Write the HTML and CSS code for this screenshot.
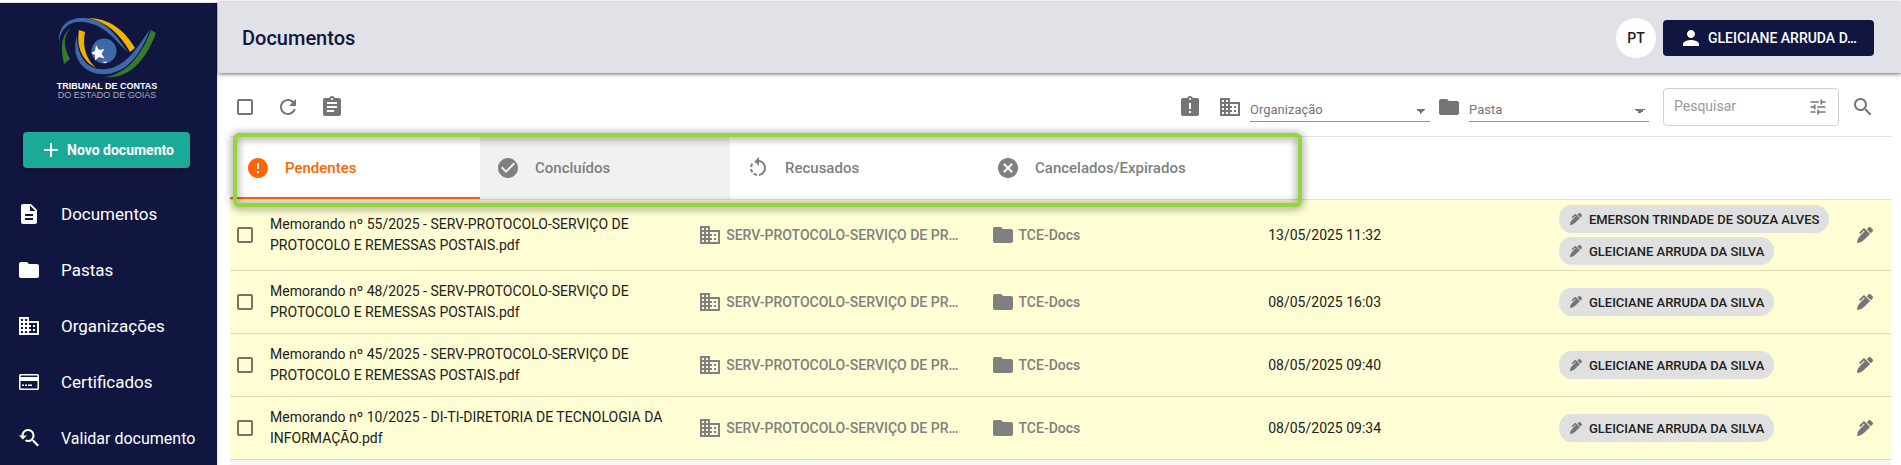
FILE: index.html
```html
<!DOCTYPE html>
<html lang="pt-BR">
<head>
<meta charset="utf-8">
<meta name="viewport" content="width=device-width, initial-scale=1">
<title>Documentos</title>
<link rel="stylesheet" href="styles.css">
</head>
<body>
<svg class="sprite" aria-hidden="true">
  <symbol id="i-description" viewBox="0 0 24 24"><path d="M14 2H6c-1.1 0-1.99.9-1.99 2L4 20c0 1.1.89 2 1.99 2H18c1.1 0 2-.9 2-2V8l-6-6zm2 16H8v-2h8v2zm0-4H8v-2h8v2zm-3-5V3.5L18.5 9H13z"/></symbol>
  <symbol id="i-folder" viewBox="0 0 24 24"><path d="M10 4H4c-1.1 0-1.99.9-1.99 2L2 18c0 1.1.9 2 2 2h16c1.1 0 2-.9 2-2V8c0-1.1-.9-2-2-2h-8l-2-2z"/></symbol>
  <symbol id="i-domain" viewBox="0 0 24 24"><path d="M12 7V3H2v18h20V7H12zM6 19H4v-2h2v2zm0-4H4v-2h2v2zm0-4H4V9h2v2zm0-4H4V5h2v2zm4 12H8v-2h2v2zm0-4H8v-2h2v2zm0-4H8V9h2v2zm0-4H8V5h2v2zm10 12h-8v-2h2v-2h-2v-2h2v-2h-2V9h8v10zm-2-8h-2v2h2v-2zm0 4h-2v2h2v-2z"/></symbol>
  <symbol id="i-card" viewBox="0 0 24 24"><path fill-rule="evenodd" d="M3.500 4h17A1.500 1.500 0 0 1 22 5.500v13a1.500 1.500 0 0 1-1.500 1.500h-17A1.500 1.500 0 0 1 2 18.500v-13A1.500 1.500 0 0 1 3.500 4zM3.500 5.500V7h17V5.500zM3.500 11v7.500h17V11zM5 14.500h2V16H5zm3 0h2V16H8zm3 0h4V16h-4z"/></symbol>
  <symbol id="i-validate" viewBox="0 0 24 24"><path d="M17.010 14h-.8l-.27-.27c.98-1.140 1.570-2.610 1.570-4.230 0-3.590-2.910-6.500-6.500-6.500s-6.500 3-6.500 6.500H2l3.840 4 4.160-4H6.510C6.510 7 8.530 5 11.010 5s4.500 2.010 4.500 4.500c0 2.480-2.020 4.500-4.500 4.500-.65 0-1.260-.14-1.820-.38L7.710 15.100c.97.57 2.090.9 3.300.9 1.610 0 3.080-.59 4.220-1.570l.27.27v.79l5.010 4.990L22 19l-4.990-5z"/></symbol>
  <symbol id="i-add" viewBox="0 0 24 24"><path d="M19 13h-6v6h-2v-6H5v-2h6V5h2v6h6v2z"/></symbol>
  <symbol id="i-refresh" viewBox="0 0 24 24"><path d="M17.650 6.350C16.200 4.900 14.210 4 12 4c-4.420 0-7.990 3.580-7.990 8s3.570 8 7.990 8c3.730 0 6.840-2.550 7.730-6h-2.080c-.82 2.330-3.040 4-5.650 4-3.310 0-6-2.690-6-6s2.690-6 6-6c1.660 0 3.140.69 4.220 1.780L13 11h7V4l-2.350 2.350z"/></symbol>
  <symbol id="i-assignment" viewBox="0 0 24 24"><path d="M19 3h-4.180C14.400 1.840 13.300 1 12 1c-1.300 0-2.400.84-2.820 2H5c-1.100 0-2 .9-2 2v14c0 1.100.9 2 2 2h14c1.100 0 2-.9 2-2V5c0-1.100-.9-2-2-2zm-7 0c.55 0 1 .45 1 1s-.45 1-1 1-1-.45-1-1 .45-1 1-1zm2 14H7v-2h7v2zm3-4H7v-2h10v2zm0-4H7V7h10v2z"/></symbol>
  <symbol id="i-late" viewBox="0 0 24 24"><path d="M19 3h-4.180C14.400 1.840 13.300 1 12 1c-1.300 0-2.400.84-2.820 2H5c-1.100 0-2 .9-2 2v14c0 1.100.9 2 2 2h14c1.100 0 2-.9 2-2V5c0-1.100-.9-2-2-2zm-6 15h-2v-2h2v2zm0-4h-2V8h2v6zm-1-9c-.55 0-1-.45-1-1s.45-1 1-1 1 .45 1 1-.45 1-1 1z"/></symbol>
  <symbol id="i-error" viewBox="0 0 24 24"><path d="M12 2C6.480 2 2 6.480 2 12s4.480 10 10 10 10-4.480 10-10S17.520 2 12 2zm1 15h-2v-2h2v2zm0-4h-2V7h2v6z"/></symbol>
  <symbol id="i-check" viewBox="0 0 24 24"><path d="M12 2C6.480 2 2 6.480 2 12s4.480 10 10 10 10-4.480 10-10S17.520 2 12 2zm-2 15l-5-5 1.410-1.410L10 14.170l7.590-7.590L19 8l-9 9z"/></symbol>
  <symbol id="i-rotate" viewBox="0 0 24 24"><path d="M7.110 8.530L5.700 7.110C4.800 8.270 4.240 9.610 4.070 11h2.020c.14-.87.49-1.720 1.020-2.470zM6.090 13H4.070c.17 1.390.72 2.730 1.620 3.890l1.410-1.420c-.52-.75-.87-1.590-1.010-2.470zm1.010 5.320c1.160.9 2.510 1.440 3.900 1.610V17.900c-.87-.15-1.710-.49-2.460-1.030L7.100 18.320zM13 4.070V1L8.450 5.550 13 10V6.090c2.840.48 5 2.940 5 5.910s-2.160 5.430-5 5.910v2.020c3.950-.49 7-3.850 7-7.930s-3.050-7.440-7-7.930z"/></symbol>
  <symbol id="i-cancel" viewBox="0 0 24 24"><path d="M12 2C6.470 2 2 6.470 2 12s4.470 10 10 10 10-4.470 10-10S17.530 2 12 2zm5 13.590L15.590 17 12 13.410 8.410 17 7 15.590 10.590 12 7 8.410 8.410 7 12 10.590 15.590 7 17 8.410 13.410 12 17 15.590z"/></symbol>
  <symbol id="i-person" viewBox="0 0 24 24"><path d="M12 12c2.210 0 4-1.790 4-4s-1.790-4-4-4-4 1.790-4 4 1.790 4 4 4zm0 2c-2.670 0-8 1.340-8 4v2h16v-2c0-2.660-5.330-4-8-4z"/></symbol>
  <symbol id="i-tune" viewBox="0 0 24 24"><path d="M3 17v2h6v-2H3zM3 5v2h10V5H3zm10 16v-2h8v-2h-8v-2h-2v6h2zM7 9v2H3v2h4v2h2V9H7zm14 4v-2H11v2h10zm-6-4h2V7h4V5h-4V3h-2v6z"/></symbol>
  <symbol id="i-search" viewBox="0 0 24 24"><path d="M15.500 14h-.79l-.28-.27C15.410 12.590 16 11.110 16 9.500 16 5.910 13.090 3 9.500 3S3 5.910 3 9.500 5.910 16 9.500 16c1.610 0 3.090-.59 4.230-1.570l.27.28v.79l5 4.990L20.490 19l-4.990-5zm-6 0C7.010 14 5 11.990 5 9.500S7.010 5 9.500 5 14 7.010 14 9.500 11.990 14 9.500 14z"/></symbol>
  <symbol id="i-pen" viewBox="0 0 512 512"><path d="M497.940 74.170l-60.110-60.110c-18.750-18.750-49.160-18.750-67.910 0l-56.550 56.550 128.020 128.020 56.550-56.550c18.750-18.750 18.750-49.150 0-67.910zm-246.800-20.530c-15.620-15.620-40.940-15.620-56.560 0L75.800 172.430c-6.250 6.250-6.250 16.380 0 22.620l22.630 22.630c6.250 6.250 16.380 6.250 22.630 0l101.820-101.820 22.630 22.620L93.950 290.030A327.038 327.038 0 0 0 .17 485.110l-.03.23c-1.700 15.280 11.210 28.200 26.490 26.510a327.020 327.020 0 0 0 195.340-93.800l196.790-196.790-82.770-82.770-84.850-84.850z"/></symbol>
</svg>

<div class="app">
  <aside class="sidebar">
    <div class="brand">
      <svg class="brand-mark" viewBox="0 0 100 62" aria-hidden="true">
        <path fill="#357a2e" d="M14 11C3 19 4 32 7 47L13 42C7 31 5 20 14 11z"/>
        <path fill="#f2b200" d="M31 1C51 1 67 12 78 31L73 35C63 17 50 5 31 1z"/>
        <path fill="#3f68a6" d="M2 25C1 7 13 0 28 1C50 3 60 20 71 35C57 23 49 8 27 5C13 3 4 11 2 25z"/>
        <path fill="#f2b200" d="M22 13L28 15C25 30 29 42 39 51C26 44 19 31 22 13z"/>
        <path fill="#357a2e" d="M94 13L99 16C91 38 75 63 47 60C69 58 85 38 94 13z"/>
        <path fill="#3f68a6" d="M20 19C20 38 29 51 43 52C66 54 79 33 93 12C84 38 68 59 43 57C23 55 14 37 20 19z"/>
        <circle fill="#3f68a6" cx="47" cy="34" r="12.500"/>
        <path fill="#fff" d="M39 28l3 5 5.500-1-3 4.500 3 5-5.500-1.500-4 3.500v-5.500l-4-2 4-2z"/>
        <path fill="#fff" d="M46 44l2 1 2-1-1 2h-2z"/>
      </svg>
      <div class="brand-name">TRIBUNAL DE CONTAS</div>
      <div class="brand-sub">DO ESTADO DE GOIÁS</div>
    </div>
    <button class="new-doc" type="button"><svg class="icon"><use href="#i-add"/></svg>Novo documento</button>
    <nav class="menu">
      <a href="#documentos"><svg class="icon"><use href="#i-description"/></svg>Documentos</a>
      <a href="#pastas"><svg class="icon"><use href="#i-folder"/></svg>Pastas</a>
      <a href="#organizacoes"><svg class="icon"><use href="#i-domain"/></svg>Organizações</a>
      <a href="#certificados"><svg class="icon"><use href="#i-card"/></svg>Certificados</a>
      <a class="long" href="#validar"><svg class="icon"><use href="#i-validate"/></svg>Validar documento</a>
    </nav>
  </aside>

  <div class="page">
    <header class="topbar">
      <h1>Documentos</h1>
      <button class="lang" type="button">PT</button>
      <button class="user" type="button"><svg class="icon"><use href="#i-person"/></svg>GLEICIANE ARRUDA D…</button>
    </header>

    <main class="content">
      <div class="toolbar">
        <input class="check" type="checkbox" aria-label="Selecionar todos">
        <button class="icon-btn" type="button" aria-label="Atualizar"><svg class="icon"><use href="#i-refresh"/></svg></button>
        <button class="icon-btn" type="button" aria-label="Relatório"><svg class="icon"><use href="#i-assignment"/></svg></button>
        <div class="filters">
          <button class="icon-btn" type="button" aria-label="Atrasados"><svg class="icon"><use href="#i-late"/></svg></button>
          <div class="filter">
            <svg class="icon"><use href="#i-domain"/></svg>
            <select aria-label="Organização"><option>Organização</option></select>
          </div>
          <div class="filter">
            <svg class="icon"><use href="#i-folder"/></svg>
            <select aria-label="Pasta"><option>Pasta</option></select>
          </div>
          <div class="search">
            <input type="text" placeholder="Pesquisar" aria-label="Pesquisar">
            <button class="tune" type="button" aria-label="Filtros"><svg class="icon icon-sm"><use href="#i-tune"/></svg></button>
          </div>
          <button class="icon-btn" type="button" aria-label="Buscar"><svg class="icon"><use href="#i-search"/></svg></button>
        </div>
      </div>

      <div class="tabs">
        <button class="tab active" type="button"><svg class="icon"><use href="#i-error"/></svg>Pendentes</button>
        <button class="tab hover" type="button"><svg class="icon"><use href="#i-check"/></svg>Concluídos</button>
        <button class="tab" type="button"><svg class="icon"><use href="#i-rotate"/></svg>Recusados</button>
        <button class="tab" type="button"><svg class="icon"><use href="#i-cancel"/></svg>Cancelados/Expirados</button>
        <div class="highlight"></div>
      </div>

      <table class="docs">
        <colgroup><col class="c-check"><col class="c-name"><col class="c-org"><col class="c-folder"><col class="c-date"><col class="c-people"><col class="c-edit"></colgroup>
        <tbody>
          <tr>
            <td><input class="check" type="checkbox" aria-label="Selecionar Memorando 55/2025"></td>
            <td class="name">Memorando nº 55/2025 - SERV-PROTOCOLO-SERVIÇO DE PROTOCOLO E REMESSAS POSTAIS.pdf</td>
            <td><div class="tag"><svg class="icon"><use href="#i-domain"/></svg>SERV-PROTOCOLO-SERVIÇO DE PR…</div></td>
            <td><div class="tag"><svg class="icon"><use href="#i-folder"/></svg>TCE-Docs</div></td>
            <td>13/05/2025 11:32</td>
            <td><div class="chips"><span class="chip"><svg class="pen-sm"><use href="#i-pen"/></svg>EMERSON TRINDADE DE SOUZA ALVES</span><span class="chip"><svg class="pen-sm"><use href="#i-pen"/></svg>GLEICIANE ARRUDA DA SILVA</span></div></td>
            <td><button class="edit" type="button" aria-label="Assinar"><svg class="pen"><use href="#i-pen"/></svg></button></td>
          </tr>
          <tr>
            <td><input class="check" type="checkbox" aria-label="Selecionar Memorando 48/2025"></td>
            <td class="name">Memorando nº 48/2025 - SERV-PROTOCOLO-SERVIÇO DE PROTOCOLO E REMESSAS POSTAIS.pdf</td>
            <td><div class="tag"><svg class="icon"><use href="#i-domain"/></svg>SERV-PROTOCOLO-SERVIÇO DE PR…</div></td>
            <td><div class="tag"><svg class="icon"><use href="#i-folder"/></svg>TCE-Docs</div></td>
            <td>08/05/2025 16:03</td>
            <td><div class="chips"><span class="chip"><svg class="pen-sm"><use href="#i-pen"/></svg>GLEICIANE ARRUDA DA SILVA</span></div></td>
            <td><button class="edit" type="button" aria-label="Assinar"><svg class="pen"><use href="#i-pen"/></svg></button></td>
          </tr>
          <tr>
            <td><input class="check" type="checkbox" aria-label="Selecionar Memorando 45/2025"></td>
            <td class="name">Memorando nº 45/2025 - SERV-PROTOCOLO-SERVIÇO DE PROTOCOLO E REMESSAS POSTAIS.pdf</td>
            <td><div class="tag"><svg class="icon"><use href="#i-domain"/></svg>SERV-PROTOCOLO-SERVIÇO DE PR…</div></td>
            <td><div class="tag"><svg class="icon"><use href="#i-folder"/></svg>TCE-Docs</div></td>
            <td>08/05/2025 09:40</td>
            <td><div class="chips"><span class="chip"><svg class="pen-sm"><use href="#i-pen"/></svg>GLEICIANE ARRUDA DA SILVA</span></div></td>
            <td><button class="edit" type="button" aria-label="Assinar"><svg class="pen"><use href="#i-pen"/></svg></button></td>
          </tr>
          <tr>
            <td><input class="check" type="checkbox" aria-label="Selecionar Memorando 10/2025"></td>
            <td class="name">Memorando nº 10/2025 - DI-TI-DIRETORIA DE TECNOLOGIA DA INFORMAÇÃO.pdf</td>
            <td><div class="tag"><svg class="icon"><use href="#i-domain"/></svg>SERV-PROTOCOLO-SERVIÇO DE PR…</div></td>
            <td><div class="tag"><svg class="icon"><use href="#i-folder"/></svg>TCE-Docs</div></td>
            <td>08/05/2025 09:34</td>
            <td><div class="chips"><span class="chip"><svg class="pen-sm"><use href="#i-pen"/></svg>GLEICIANE ARRUDA DA SILVA</span></div></td>
            <td><button class="edit" type="button" aria-label="Assinar"><svg class="pen"><use href="#i-pen"/></svg></button></td>
          </tr>
        </tbody>
      </table>
      <div class="rest"></div>
    </main>
  </div>
</div>
</body>
</html>
```

FILE: styles.css
```css
* { box-sizing: border-box; }

body {
  margin: 0;
  background: #fff;
  color: #212121;
  font-family: Roboto, "Liberation Sans", sans-serif;
  font-size: 14px;
  line-height: 21px;
}

button, input, select { font: inherit; color: inherit; }

button {
  padding: 0;
  border: 0;
  background: none;
  cursor: pointer;
}

.sprite { display: none; }

.icon {
  flex: none;
  display: block;
  width: 24px;
  height: 24px;
  fill: currentColor;
}

.icon-sm { width: 20px; height: 20px; }

.app {
  display: flex;
  height: 100vh;
  padding-top: 2px;
  overflow: hidden;
}

/* Sidebar */
.sidebar {
  flex: none;
  display: flex;
  flex-direction: column;
  width: 218px;
  overflow: hidden;
  background: #10163f;
  border-top: 1px solid #e1e2e7;
  border-right: 1px solid #e1e2e7;
  color: #fff;
}

.brand {
  flex: none;
  display: flex;
  flex-direction: column;
  align-items: center;
  padding: 14px 3px 0 0;
  height: 129px;
  font-family: "Liberation Sans", Arial, sans-serif;
  white-space: nowrap;
}

.brand-mark { width: 100px; height: 62px; }

.brand-name {
  font-size: 9px;
  font-weight: 700;
  line-height: 14px;
}

.brand-sub {
  color: #a9abc0;
  font-size: 9px;
  line-height: 4px;
}

.new-doc {
  display: flex;
  flex: none;
  align-items: center;
  justify-content: center;
  gap: 4px;
  height: 36px;
  margin: 0 27px 18px 23px;
  border-radius: 4px;
  background: #1ba998;
  box-shadow: 0 2px 3px rgba(0, 0, 0, .3);
  font-weight: 700;
}

.menu { flex: none; }

.menu a {
  display: flex;
  align-items: center;
  gap: 20px;
  height: 56px;
  padding-left: 17px;
  color: #fff;
  font-size: 17px;
  text-decoration: none;
  white-space: nowrap;
}

.menu .long { font-size: 16px; }

/* Top bar */
.page {
  flex: 1;
  display: flex;
  flex-direction: column;
  min-width: 0;
}

.topbar {
  z-index: 1;
  flex: none;
  display: flex;
  align-items: center;
  gap: 7px;
  height: 71px;
  padding: 1px 27px 0 24px;
  background: #e1e2e7;
  box-shadow: 0 1px 4px rgba(0, 0, 0, .6);
}

.topbar h1 {
  flex: 1;
  margin: 0;
  color: #10163f;
  font-size: 20px;
  font-weight: 500;
}

.lang {
  width: 40px;
  height: 40px;
  border-radius: 50%;
  background: #fff;
  font-weight: 500;
}

.user {
  display: flex;
  align-items: center;
  gap: 5px;
  min-width: 211px;
  height: 36px;
  padding: 0 16px;
  border-radius: 4px;
  background: #10163f;
  color: #fff;
  font-weight: 500;
  white-space: nowrap;
}

/* Toolbar */
.content {
  flex: 1;
  display: flex;
  flex-direction: column;
  min-height: 0;
  padding: 0 10px 0 12px;
}

.toolbar {
  flex: none;
  display: flex;
  align-items: center;
  gap: 20px;
  height: 64px;
  padding: 4px 16px 0 7px;
  border-bottom: 1px solid #e0e0e0;
}

.check {
  appearance: none;
  display: block;
  flex: none;
  width: 16px;
  height: 16px;
  margin: 0;
  border: 2px solid rgba(0, 0, 0, .54);
  border-radius: 2px;
}

.toolbar > .check { margin-right: 3px; }

.icon-btn { color: #757575; }

.filters {
  display: flex;
  align-items: center;
  gap: 14px;
  margin-left: auto;
}

.filters > .icon-btn { margin-right: 2px; }
.filters > .icon-btn:last-child { margin: 0 0 0 -2px; }

.filter {
  display: flex;
  align-items: center;
  gap: 8px;
  color: #757575;
}

.filter + .filter { margin-left: -7px; }

.filter select {
  appearance: none;
  width: 180px;
  height: 30px;
  padding: 6px 20px 0 0;
  border: 0;
  border-bottom: 1px solid #949494;
  border-radius: 0;
  background:
    linear-gradient(to bottom right, #757575 50%, transparent 50%) right 4px top 17px / 5px 5px no-repeat,
    linear-gradient(to bottom left, #757575 50%, transparent 50%) right 9px top 17px / 5px 5px no-repeat;
  color: #757575;
  font-size: 13px;
}

.search {
  display: flex;
  align-items: center;
  width: 176px;
  height: 38px;
  padding: 0 10px;
  border: 1px solid #cfcfcf;
  border-radius: 4px;
}

.search input {
  flex: 1;
  min-width: 0;
  padding: 0;
  border: 0;
  outline: 0;
  background: none;
}

.search input::placeholder { color: #9a9a9a; opacity: 1; }

.tune { color: #757575; }

/* Tabs */
.tabs {
  position: relative;
  flex: none;
  display: flex;
  height: 63px;
  border-bottom: 1px solid #e0e0e0;
}

.tab {
  display: flex;
  align-items: center;
  gap: 15px;
  width: 250px;
  padding: 2px 0 0 16px;
  border-bottom: 2px solid transparent;
  color: #808080;
  font-size: 15px;
  font-weight: 500;
}

.tab.active { border-color: #ff6600; color: #ff6600; }
.tab.hover { background: #f1f1f1; }

.highlight {
  position: absolute;
  top: -4px;
  left: 3px;
  width: 1069px;
  height: 74px;
  border: 4px solid #94d641;
  border-radius: 6px;
  filter: drop-shadow(0 1px 4px rgba(0, 0, 0, .6));
  pointer-events: none;
}

/* Documents */
.docs {
  width: 100%;
  table-layout: fixed;
  border-collapse: separate;
  border-spacing: 0;
}

.c-check { width: 40px; }
.c-name { width: 25.9%; }
.c-org { width: 17.6%; }
.c-folder { width: 16.6%; }
.c-date { width: 17.5%; }
.c-edit { width: 34px; }

.docs td {
  height: 63px;
  padding: 0;
  border-bottom: 1px solid #dddcb8;
  background: #fffdd3;
  vertical-align: middle;
}

.docs tr:first-child td { height: 71px; }
.docs td:first-child { padding-left: 7px; }
.docs td.name { padding-right: 30px; }

.tag {
  display: flex;
  align-items: center;
  gap: 4px;
  margin-left: -2px;
  color: #808080;
  font-weight: 500;
  white-space: nowrap;
}

.chips {
  display: flex;
  flex-direction: column;
  align-items: flex-start;
  gap: 4px;
}

.chip {
  display: flex;
  align-items: center;
  gap: 7px;
  height: 28px;
  padding: 0 10px 0 11px;
  border-radius: 12px 14px 14px 12px / 14px;
  background: #e0e0e0;
  font-size: 13px;
  font-weight: 500;
  white-space: nowrap;
}

.pen-sm { width: 12px; height: 12px; fill: #757575; }

.edit { display: block; }
.pen { display: block; width: 16px; height: 16px; fill: #757575; }

.rest { flex: 1; background: #f5f6f6; }
```
